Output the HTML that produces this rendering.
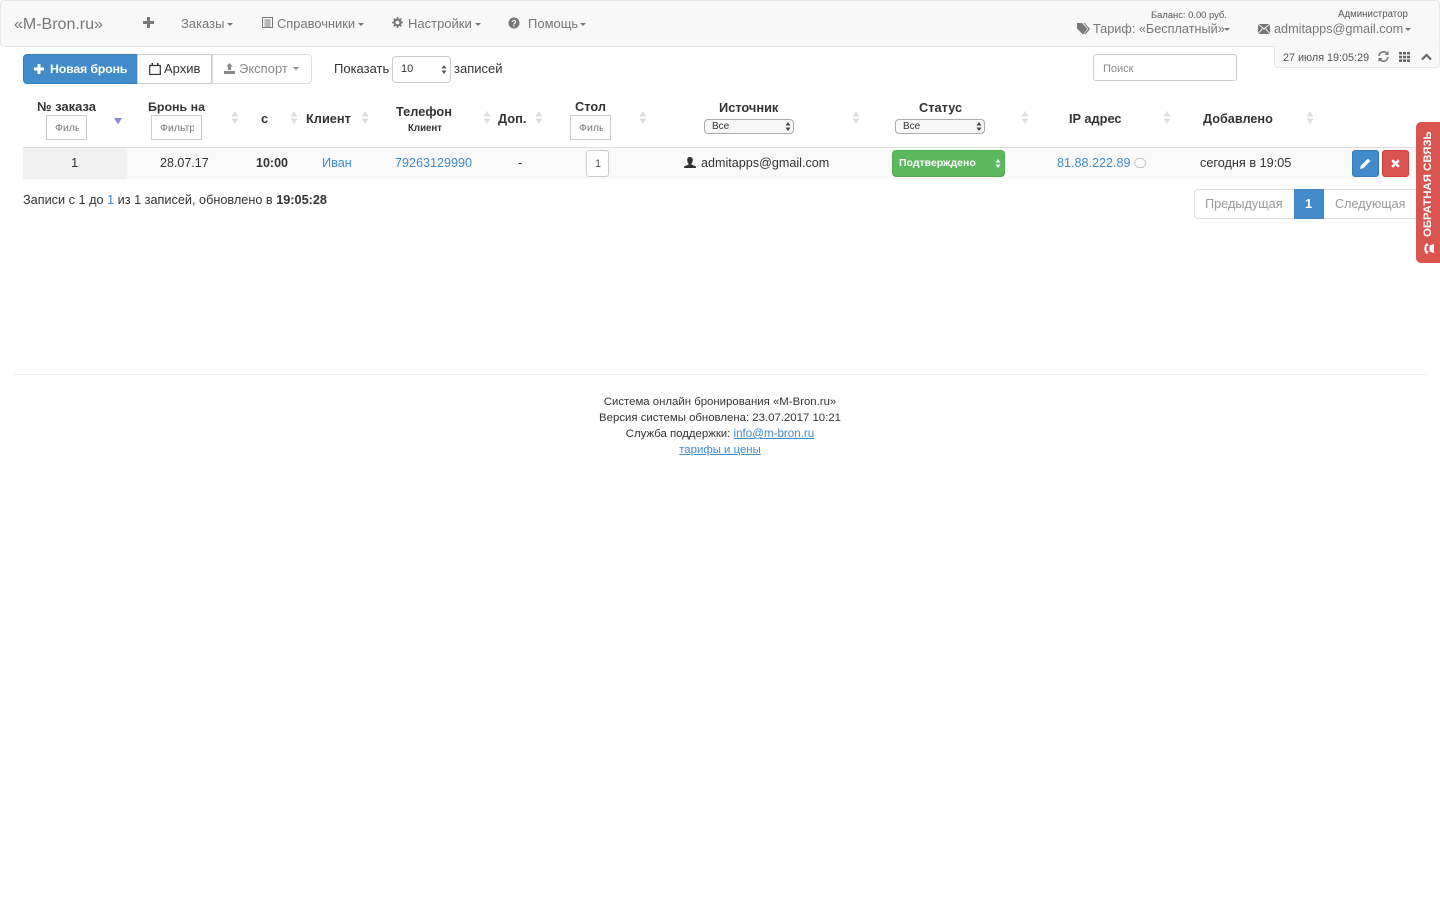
<!DOCTYPE html>
<html lang="ru"><head><meta charset="utf-8"><title>M-Bron</title>
<style>
html,body{margin:0;padding:0;background:#fff}
body{width:1440px;height:900px;overflow:hidden;position:relative;font-family:"Liberation Sans","DejaVu Sans",sans-serif;font-size:13px;color:#333}
.t{position:absolute;white-space:nowrap;line-height:20px}
.b{position:absolute;box-sizing:border-box}
.c{text-align:center}
svg{position:absolute;display:block}
.nav{color:#777;font-size:13px}
.th{font-weight:bold;font-size:12.800px;color:#333}
.car{position:absolute;width:0;height:0;border-left:3.500px solid transparent;border-right:3.500px solid transparent;border-top:3.500px solid #777}
.inp{border:1px solid #ccc;background:#fff;color:#777;font-size:10.500px;line-height:25px;padding:0 7px 0 8px}
.inp span{display:block;overflow:hidden;white-space:nowrap}
.sel{border:1px solid #aaa;border-radius:4px;background:#f8f8f8;font-size:10px;line-height:14px;padding-left:7px;color:#333}
a{color:#428bca}
</style></head><body>

<!-- navbar -->
<div class="b" style="left:0;top:0;width:1440px;height:47px;background:#f8f8f8;border:1px solid #e7e7e7;border-radius:4px"></div>
<div class="t nav" style="left:14px;top:15px;font-size:16px">«M-Bron.ru»</div>
<svg style="left:143px;top:17px" width="11" height="11" viewBox="0 0 11 11"><path d="M4 0h3v4h4v3H7v4H4V7H0V4h4z" fill="#777"/></svg>
<div class="t nav" style="left:181px;top:14px">Заказы</div><div class="car" style="left:227px;top:23px"></div>
<svg style="left:262px;top:17px" width="11" height="11" viewBox="0 0 11 11"><path d="M.5.5h10v10H.5z" fill="none" stroke="#777"/><path d="M2.500 3h6M2.500 5h6M2.500 7h6M2.500 9h6" stroke="#777"/></svg>
<div class="t nav" style="left:277px;top:14px;font-size:12.900px">Справочники</div><div class="car" style="left:358px;top:23px"></div>
<svg style="left:392px;top:17px" width="11" height="11" viewBox="0 0 11 11"><circle cx="5.500" cy="5.500" r="3" fill="none" stroke="#777" stroke-width="2.200"/><path d="M5.500 0v11M0 5.500h11M1.600 1.600l7.800 7.800M9.400 1.600l-7.800 7.800" stroke="#777" stroke-width="1.500" stroke-dasharray="2 7"/></svg>
<div class="t nav" style="left:408px;top:14px">Настройки</div><div class="car" style="left:475px;top:23px"></div>
<svg style="left:508px;top:17px" width="12" height="12" viewBox="0 0 12 12"><circle cx="6" cy="6" r="5.500" fill="#777"/><text x="6" y="9.500" font-size="9" font-weight="bold" fill="#f8f8f8" text-anchor="middle" font-family="Liberation Sans">?</text></svg>
<div class="t nav" style="left:528px;top:14px">Помощь</div><div class="car" style="left:580px;top:23px"></div>

<div class="t" style="left:1151px;top:5px;font-size:9.400px;color:#555">Баланс: 0.00 руб.</div>
<svg style="left:1077px;top:23px" width="13" height="12" viewBox="0 0 13 12"><path d="M0 0h5l5.500 6-4.500 5.500-6-6z" fill="#777"/><path d="M6.500 0h1.200l5.300 6-4.700 5.500-1-.7 4.100-4.800z" fill="#777"/></svg>
<div class="t nav" style="left:1093px;top:19px;font-size:12.700px">Тариф: «Бесплатный»</div><div class="car" style="left:1224px;top:28px"></div>
<div class="t" style="left:1338px;top:5px;font-size:9.700px;color:#555">Администратор</div>
<svg style="left:1258px;top:24px" width="12" height="10" viewBox="0 0 12 10"><path d="M0 0h12v10H0z" fill="#777"/><path d="M0 0l6 5 6-5M0 10l4.500-5.500M12 10L7.500 4.500" fill="none" stroke="#f8f8f8" stroke-width=".9"/></svg>
<div class="t nav" style="left:1274px;top:19px;font-size:12.700px">admitapps@gmail.com</div><div class="car" style="left:1405px;top:28px"></div>

<!-- clock tab -->
<div class="b" style="left:1274px;top:46px;width:166px;height:22px;background:#f8f8f8;border:1px solid #e7e7e7;border-top:0;border-radius:0 0 4px 4px"></div>
<div class="t" style="left:1283px;top:48px;font-size:10.800px;color:#555">27 июля 19:05:29</div>
<svg style="left:1378px;top:51px" width="11" height="11" viewBox="0 0 11 11"><path d="M1 5a4.500 4.500 0 0 1 8-2.500M10 6a4.500 4.500 0 0 1-8 2.500" fill="none" stroke="#777" stroke-width="1.500"/><path d="M10.500 0v4h-4zM.5 11V7h4z" fill="#777"/></svg>
<svg style="left:1399px;top:52px" width="11" height="10" viewBox="0 0 11 10" fill="#666"><path d="M0 0h3v2.500H0zM4 0h3v2.500H4zM8 0h3v2.500H8zM0 3.700h3v2.500H0zM4 3.700h3v2.500H4zM8 3.700h3v2.500H8zM0 7.400h3V10H0zM4 7.400h3V10H4zM8 7.400h3V10H8z"/></svg>
<svg style="left:1421px;top:53px" width="11" height="8" viewBox="0 0 11 8"><path d="M1 6.500l4.500-4.500L10 6.500" fill="none" stroke="#666" stroke-width="2.200"/></svg>

<!-- toolbar -->
<div class="b" style="left:23px;top:54px;width:115px;height:30px;background:#428bca;border:1px solid #357ebd;border-radius:4px 0 0 4px"></div>
<svg style="left:34px;top:64px" width="10" height="10" viewBox="0 0 10 10"><path d="M3.500 0h3v3.500H10v3H6.500V10h-3V6.500H0v-3h3.500z" fill="#fff"/></svg>
<div class="t" style="left:50px;top:59px;color:#fff;font-weight:bold;font-size:12.400px;letter-spacing:-.2px">Новая бронь</div>
<div class="b" style="left:137px;top:54px;width:75px;height:30px;background:#fff;border:1px solid #ccc"></div>
<svg style="left:149px;top:63px" width="12" height="12" viewBox="0 0 12 12"><path d="M.7 2.500h10.600v9H.7z" fill="none" stroke="#333" stroke-width="1.200"/><path d="M2.500 0h1.500v3H2.500zM8 0h1.500v3H8z" fill="#333"/></svg>
<div class="t" style="left:164px;top:59px;color:#333">Архив</div>
<div class="b" style="left:212px;top:54px;width:100px;height:30px;background:#fff;border:1px solid #ddd;border-radius:0 4px 4px 0"></div>
<svg style="left:224px;top:63px" width="11" height="11" viewBox="0 0 11 11"><path d="M5.500 0l3 3.500H7V7H4V3.500H2.500zM0 8h11v3H0z" fill="#888"/></svg>
<div class="t" style="left:239px;top:59px;color:#888">Экспорт</div><div class="car" style="left:293px;top:67px;border-top-color:#888"></div>
<div class="t" style="left:334px;top:59px;color:#333">Показать</div>
<div class="b" style="left:392px;top:56px;width:59px;height:27px;background:#fff;border:1px solid #ccc;border-radius:4px"></div>
<div class="t" style="left:401px;top:59px;font-size:11px;color:#333">10</div>
<svg style="left:441px;top:65px" width="6" height="9" viewBox="0 0 6 9"><path d="M3 0l2.500 3.500h-5zM3 9L.5 5.500h5z" fill="#555"/></svg>
<div class="t" style="left:454px;top:59px;color:#333">записей</div>
<div class="b" style="left:1093px;top:54px;width:144px;height:27px;background:#fff;border:1px solid #ccc;border-radius:3px"></div>
<div class="t" style="left:1103px;top:59px;font-size:11px;color:#888">Поиск</div>

<!-- header -->
<div class="t th" style="left:37px;top:97px;font-size:13px">№ заказа</div>
<div class="b inp" style="left:46px;top:115px;width:41px;height:25px"><span>Фильтр</span></div>
<svg style="left:114px;top:118px" width="8" height="7" viewBox="0 0 8 7"><path d="M0 0h8L4 6.500z" fill="#8888d8"/></svg>
<div class="t th" style="left:148px;top:97px;font-size:12.400px">Бронь на</div>
<div class="b inp" style="left:151px;top:115px;width:51px;height:25px"><span>Фильтр</span></div>
<div class="t th" style="left:261px;top:109px">с</div>
<div class="t th" style="left:306px;top:109px">Клиент</div>
<div class="t th" style="left:396px;top:102px">Телефон</div>
<div class="t" style="left:408px;top:119px;font-size:9.700px;font-weight:bold;color:#333">Клиент</div>
<div class="t th" style="left:498px;top:109px">Доп.</div>
<div class="t th" style="left:575px;top:97px">Стол</div>
<div class="b inp" style="left:570px;top:115px;width:41px;height:25px"><span>Фильтр</span></div>
<div class="t th" style="left:719px;top:98px">Источник</div>
<div class="b sel" style="left:704px;top:119px;width:90px;height:15px">Все</div>
<svg style="left:785px;top:122px" width="6" height="9" viewBox="0 0 6 9"><path d="M3 0l2.500 3.500h-5zM3 9L.5 5.500h5z" fill="#444"/></svg>
<div class="t th" style="left:919px;top:98px">Статус</div>
<div class="b sel" style="left:895px;top:119px;width:90px;height:15px">Все</div>
<svg style="left:976px;top:122px" width="6" height="9" viewBox="0 0 6 9"><path d="M3 0l2.500 3.500h-5zM3 9L.5 5.500h5z" fill="#444"/></svg>
<div class="t th" style="left:1069px;top:109px">IP адрес</div>
<div class="t th" style="left:1203px;top:109px;font-size:12.700px">Добавлено</div>

<!-- sort arrows -->
<svg style="left:230.500px;top:111px" width="8" height="13" viewBox="0 0 8 13"><path d="M4 0l3.500 5.500h-7zM4 13L.5 7.500h7z" fill="#ddd"/></svg>
<svg style="left:289.500px;top:111px" width="8" height="13" viewBox="0 0 8 13"><path d="M4 0l3.500 5.500h-7zM4 13L.5 7.500h7z" fill="#ddd"/></svg>
<svg style="left:360.500px;top:111px" width="8" height="13" viewBox="0 0 8 13"><path d="M4 0l3.500 5.500h-7zM4 13L.5 7.500h7z" fill="#ddd"/></svg>
<svg style="left:482.500px;top:111px" width="8" height="13" viewBox="0 0 8 13"><path d="M4 0l3.500 5.500h-7zM4 13L.5 7.500h7z" fill="#ddd"/></svg>
<svg style="left:534.500px;top:111px" width="8" height="13" viewBox="0 0 8 13"><path d="M4 0l3.500 5.500h-7zM4 13L.5 7.500h7z" fill="#ddd"/></svg>
<svg style="left:638.500px;top:111px" width="8" height="13" viewBox="0 0 8 13"><path d="M4 0l3.500 5.500h-7zM4 13L.5 7.500h7z" fill="#ddd"/></svg>
<svg style="left:851.500px;top:111px" width="8" height="13" viewBox="0 0 8 13"><path d="M4 0l3.500 5.500h-7zM4 13L.5 7.500h7z" fill="#ddd"/></svg>
<svg style="left:1020.500px;top:111px" width="8" height="13" viewBox="0 0 8 13"><path d="M4 0l3.500 5.500h-7zM4 13L.5 7.500h7z" fill="#ddd"/></svg>
<svg style="left:1162.500px;top:111px" width="8" height="13" viewBox="0 0 8 13"><path d="M4 0l3.500 5.500h-7zM4 13L.5 7.500h7z" fill="#ddd"/></svg>
<svg style="left:1305.500px;top:111px" width="8" height="13" viewBox="0 0 8 13"><path d="M4 0l3.500 5.500h-7zM4 13L.5 7.500h7z" fill="#ddd"/></svg>

<!-- row -->
<div class="b" style="left:23px;top:147px;width:1394px;height:32px;background:#f9f9f9;border-top:1px solid #ddd"></div>
<div class="b" style="left:23px;top:148px;width:104px;height:31px;background:#f1f1f1"></div>
<div class="t" style="left:71px;top:153px">1</div>
<div class="t" style="left:160px;top:153px;font-size:12.500px">28.07.17</div>
<div class="t" style="left:256px;top:153px;font-weight:bold;font-size:12.500px">10:00</div>
<div class="t" style="left:322px;top:153px;color:#428bca;font-size:12.700px">Иван</div>
<div class="t" style="left:395px;top:153px;color:#428bca;font-size:12.600px">79263129990</div>
<div class="t" style="left:518px;top:153px">-</div>
<div class="b" style="left:586px;top:150px;width:23px;height:27px;background:#fff;border:1px solid #ccc;border-radius:3px"></div>
<div class="t" style="left:595px;top:154px;font-size:11px;color:#555">1</div>
<svg style="left:684px;top:157px" width="12" height="11" viewBox="0 0 12 11"><path d="M6 0c1.800 0 2.800 1.300 2.800 3S7.900 6 7.500 6.500v1L12 9.500V11H0V9.500l4.500-2v-1C4.100 6 3.200 5 3.200 3S4.200 0 6 0z" fill="#333"/></svg>
<div class="t" style="left:701px;top:153px;font-size:12.600px">admitapps@gmail.com</div>
<div class="b" style="left:892px;top:150px;width:113px;height:27px;background:#5cb85c;border:1px solid #4cae4c;border-radius:4px"></div>
<div class="t" style="left:899px;top:153px;font-size:10.500px;font-weight:bold;color:#fff">Подтверждено</div>
<svg style="left:995px;top:159px" width="6" height="9" viewBox="0 0 6 9"><path d="M3 0l2.500 3.500h-5zM3 9L.5 5.500h5z" fill="#fff"/></svg>
<div class="t" style="left:1057px;top:153px;color:#428bca;font-size:12.600px">81.88.222.89</div>
<svg style="left:1134px;top:158px" width="12" height="10" viewBox="0 0 12 10"><path d="M3 .6h5.500l2.800 2.400v4L9 9.400H3.500L.8 6.500V3z" fill="none" stroke="#bbb" stroke-width=".8"/></svg>
<div class="t" style="left:1200px;top:153px;font-size:12.700px">сегодня в 19:05</div>
<div class="b" style="left:1352px;top:150px;width:27px;height:27px;background:#428bca;border:1px solid #357ebd;border-radius:3px"></div>
<svg style="left:1360px;top:158px" width="11" height="11" viewBox="0 0 11 11"><path d="M0 11l.8-3.200L8 .6l2.400 2.400-7.200 7.200z" fill="#fff"/></svg>
<div class="b" style="left:1382px;top:150px;width:27px;height:27px;background:#d9534f;border:1px solid #d43f3a;border-radius:3px"></div>
<svg style="left:1391px;top:159px" width="9" height="9" viewBox="0 0 9 9"><path d="M1.200 1.200l6.600 6.600M7.800 1.200L1.200 7.800" stroke="#fff" stroke-width="2.600"/></svg>

<!-- info and pager -->
<div class="t" style="left:23px;top:190px;font-size:12.700px">Записи с 1 до <span style="color:#428bca">1</span> из 1 записей, обновлено в <b>19:05:28</b></div>
<div class="b" style="left:1194px;top:189px;width:222px;height:30px;background:#fff;border:1px solid #ddd;border-right:0;border-radius:4px 0 0 4px"></div>
<div class="t" style="left:1205px;top:194px;color:#999;font-size:12.700px">Предыдущая</div>
<div class="b" style="left:1294px;top:189px;width:30px;height:30px;background:#428bca"></div>
<div class="t" style="left:1305px;top:194px;color:#fff;font-weight:bold">1</div>
<div class="t" style="left:1335px;top:194px;color:#999;font-size:12.600px">Следующая</div>

<!-- feedback -->
<div class="b" style="left:1416px;top:122px;width:24px;height:141px;background:#d9534f;border-radius:5px 0 0 5px"></div>
<div class="t" style="left:1356px;top:175px;width:144px;height:20px;transform:rotate(-90deg);color:#fff;font-weight:bold;font-size:11.400px;text-align:left;padding-left:20px;box-sizing:border-box">ОБРАТНАЯ СВЯЗЬ</div>
<svg style="left:1423px;top:243px" width="11" height="11" viewBox="0 0 11 11"><g transform="rotate(-90 5.500 5.500)"><path d="M0 4C1.500 .5 9.500 .5 11 4L8.500 5.500 7.500 3.500h-4l-1 2zM2.500 6.500h6L10 11H1z" fill="#fff"/></g></svg>

<!-- footer -->
<div class="b" style="left:14px;top:374px;width:1413px;height:1px;background:#eee"></div>
<div class="t c" style="left:0;width:1440px;top:394px;font-size:11.400px;line-height:16px;color:#333">Система онлайн бронирования «M-Bron.ru»<br>Версия системы обновлена: 23.07.2017 10:21<br>Служба поддержки: <a href="#" style="font-size:11.600px">info@m-bron.ru</a><br><a href="#">тарифы и цены</a></div>

</body></html>
